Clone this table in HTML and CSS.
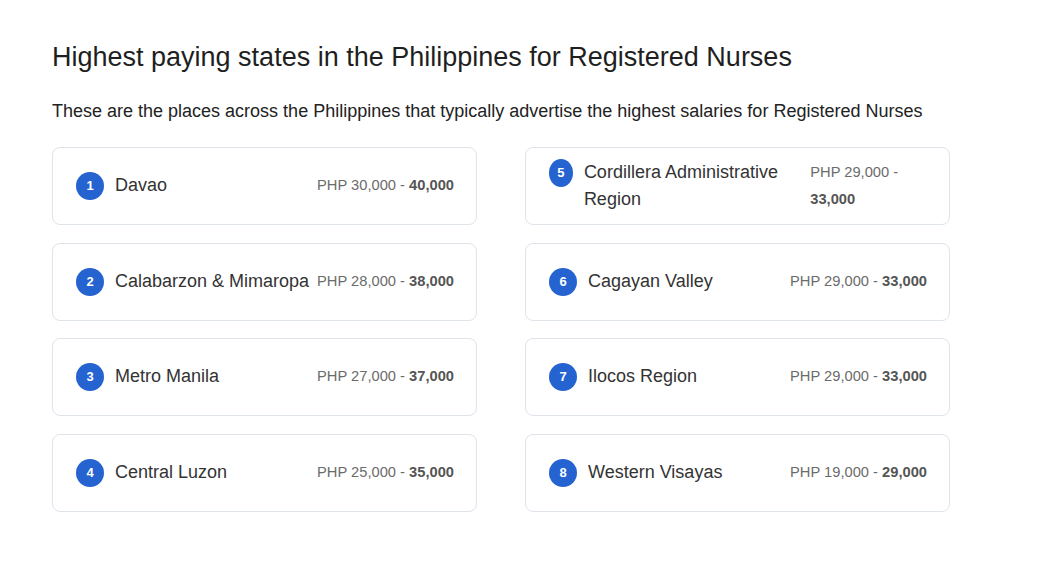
FILE: index.html
```html
<!DOCTYPE html>
<html lang="en">
<head>
<meta charset="utf-8">
<title>Highest paying states</title>
<link rel="stylesheet" href="styles.css">
</head>
<body>
<main class="page">
  <h1 class="title">Highest paying states in the Philippines for Registered Nurses</h1>
  <p class="intro">These are the places across the Philippines that typically advertise the highest salaries for Registered Nurses</p>
  <ol class="grid">
    <li class="card"><div class="row"><span class="badge">1</span><span class="name">Davao</span><span class="salary">PHP 30,000 - <b>40,000</b></span></div></li>
    <li class="card"><div class="row"><span class="badge">2</span><span class="name">Calabarzon &amp; Mimaropa</span><span class="salary">PHP 28,000 - <b>38,000</b></span></div></li>
    <li class="card"><div class="row"><span class="badge">3</span><span class="name">Metro Manila</span><span class="salary">PHP 27,000 - <b>37,000</b></span></div></li>
    <li class="card"><div class="row"><span class="badge">4</span><span class="name">Central Luzon</span><span class="salary">PHP 25,000 - <b>35,000</b></span></div></li>
    <li class="card"><div class="row"><span class="badge">5</span><span class="name">Cordillera Administrative Region</span><span class="salary">PHP 29,000 - <b>33,000</b></span></div></li>
    <li class="card"><div class="row"><span class="badge">6</span><span class="name">Cagayan Valley</span><span class="salary">PHP 29,000 - <b>33,000</b></span></div></li>
    <li class="card"><div class="row"><span class="badge">7</span><span class="name">Ilocos Region</span><span class="salary">PHP 29,000 - <b>33,000</b></span></div></li>
    <li class="card"><div class="row"><span class="badge">8</span><span class="name">Western Visayas</span><span class="salary">PHP 19,000 - <b>29,000</b></span></div></li>
  </ol>
</main>
</body>
</html>
```

FILE: styles.css
```css
html, body {
  margin: 0;
  padding: 0;
  background: #ffffff;
}

body {
  font-family: "Liberation Sans", Arial, sans-serif;
  color: #222222;
}

.page {
  padding: 41px 52px 40px 52px;
}

.title {
  margin: 0;
  font-size: 27px;
  line-height: 32px;
  font-weight: 400;
  color: #1f1f1f;
}

.intro {
  margin: 25.5px 0 0 0;
  font-size: 18px;
  line-height: 24px;
  color: #222222;
}

.grid {
  list-style: none;
  margin: 24.5px 0 0 0;
  padding: 0;
  display: grid;
  grid-template-columns: 425px 425px;
  grid-template-rows: repeat(4, auto);
  grid-auto-flow: column;
  column-gap: 48px;
  row-gap: 17.67px;
}

.card {
  box-sizing: border-box;
  min-height: 78px;
  border: 1px solid #dfe3ea;
  border-radius: 8px;
  padding: 11px 22px 11px 23px;
  display: flex;
  align-items: center;
}

.row {
  display: flex;
  align-items: flex-start;
  width: 100%;
}

.badge {
  flex: 0 1 28px;
  width: 28px;
  height: 28px;
  border-radius: 50%;
  background: #2563d0;
  color: #ffffff;
  font-size: 13px;
  font-weight: 700;
  line-height: 28px;
  text-align: center;
}

.name {
  flex: 1 1 auto;
  margin-left: 11px;
  font-size: 18px;
  line-height: 27px;
  color: #333333;
}

.salary {
  flex: 0 1 auto;
  margin-left: 8px;
  font-size: 14.7px;
  line-height: 27px;
  color: #6b6b6b;
}

.salary b {
  color: #555555;
  font-weight: 700;
}
```
